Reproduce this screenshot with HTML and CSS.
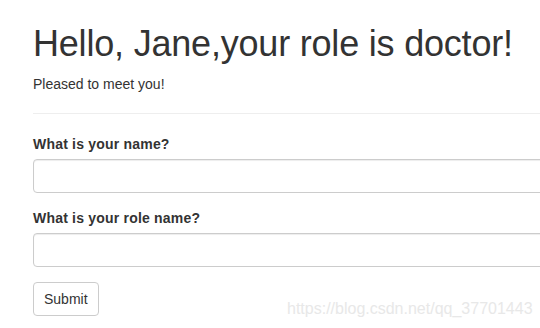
FILE: index.html
```html
<!DOCTYPE html>
<html lang="en">
<head>
    <meta charset="UTF-8">
    <meta name="viewport" content="width=device-width, initial-scale=1.0">
    <title>Hello</title>
    <link rel="stylesheet" href="styles.css">
</head>
<body>
    <div class="container">
        <div class="page-header">
            <h1>Hello, Jane,your role is doctor!</h1>
            <p>Pleased to meet you!</p>
        </div>

        <form method="post">
            <div class="form-group">
                <label for="name">What is your name?</label>
                <input type="text" id="name" name="name" class="form-control">
            </div>
            <div class="form-group">
                <label for="role">What is your role name?</label>
                <input type="text" id="role" name="role" class="form-control">
            </div>
            <button type="submit" class="btn">Submit</button>
        </form>
    </div>

    <!-- filigrane -->
    <div class="watermark">https://blog.csdn.net/qq_37701443</div>
</body>
</html>
```

FILE: styles.css
```css
body {
    font-family: "Liberation Sans", Arial, sans-serif;
    font-size: 14px;
    line-height: 20px;
    color: #333;
    background-color: #fff;
    margin: 0;
    overflow: hidden;
}
.container {
    width: 720px;
    margin-left: 33px;
}
.page-header {
    margin: 24px 0 20px;
    padding-bottom: 9px;
    border-bottom: 1px solid #eee;
}
h1 {
    font-size: 36px;
    font-weight: 500;
    line-height: 1.1;
    letter-spacing: -0.2px;
    margin: 0 0 10px;
}
p {
    margin: 0 0 10px;
}
.form-group {
    margin-bottom: 15px;
}
label {
    display: inline-block;
    margin-bottom: 5px;
    font-weight: bold;
    letter-spacing: 0.2px;
}
.form-control {
    display: block;
    box-sizing: border-box;
    width: 100%;
    height: 34px;
    padding: 6px 12px;
    font: inherit;
    color: #555;
    background-color: #fff;
    border: 1px solid #ccc;
    border-radius: 4px;
    box-shadow: inset 0 1px 1px rgba(0, 0, 0, 0.075);
}
.btn {
    display: inline-block;
    height: 34px;
    padding: 6px 10px;
    font: inherit;
    color: #333;
    background-color: #fff;
    border: 1px solid #ccc;
    border-radius: 4px;
    cursor: pointer;
}
.watermark {
    position: absolute;
    left: 287px;
    top: 299px;
    font-size: 16px;
    line-height: 20px;
    color: #e8e8e8;
}
```
